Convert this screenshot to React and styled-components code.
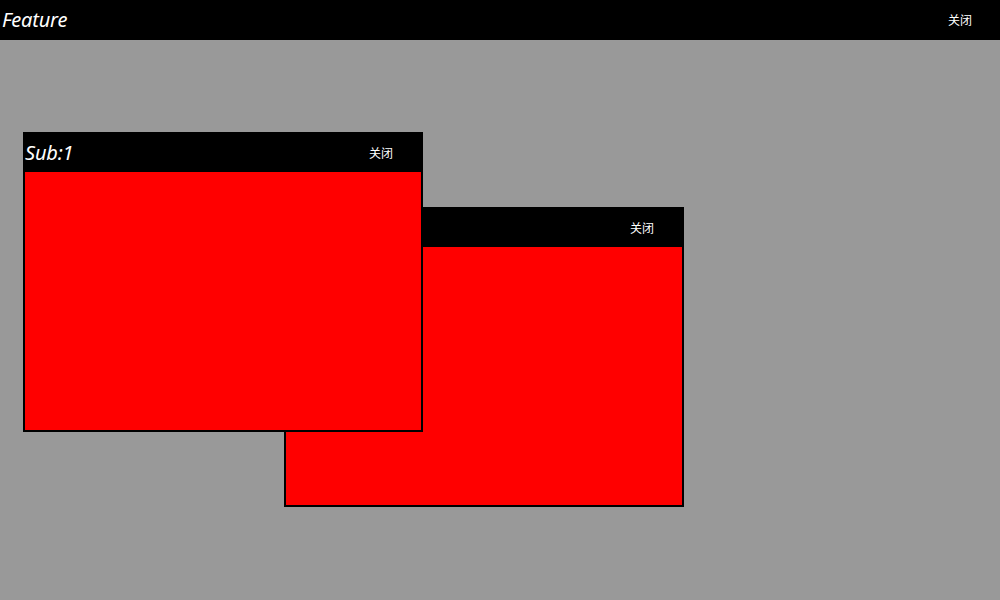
import React from 'react';
import styled, { createGlobalStyle } from 'styled-components';

const GlobalStyle = createGlobalStyle`
  html, body {
    margin: 0;
    padding: 0;
    background: #999999;
    font-family: "Noto Sans", "Noto Sans CJK SC", sans-serif;
  }
`;

const Page = styled.div`
  width: 1000px;
  height: 600px;
  display: flex;
  flex-direction: column;
  background: #999999;
  overflow: hidden;
`;

const Bar = styled.div`
  height: ${(p) => p.height}px;
  flex-shrink: 0;
  display: flex;
  align-items: center;
  justify-content: space-between;
  background: #000;
  color: #fff;
`;

const Title = styled.span`
  font-style: italic;
  font-size: 20px;
  padding: 0 0 2px ${(p) => p.indent}px;
  letter-spacing: -0.2px;
`;

const CloseButton = styled.button`
  background: none;
  border: none;
  color: #fff;
  font-family: "Noto Sans CJK SC", sans-serif;
  font-size: 12px;
  padding: 0 28px 1px 0;
  cursor: pointer;
`;

const Desktop = styled.div`
  position: relative;
  flex: 1;
`;

const Window = styled.div`
  position: absolute;
  left: ${(p) => p.x}px;
  top: ${(p) => p.y}px;
  width: 396px;
  height: 296px;
  border: 2px solid #000;
  display: flex;
  flex-direction: column;
`;

const Body = styled.div`
  flex: 1;
  background: #ff0000;
`;

const SubWindow = ({ title, x, y }) => (
  <Window x={x} y={y}>
    <Bar height={38}>
      <Title indent={0}>{title}</Title>
      <CloseButton>关闭</CloseButton>
    </Bar>
    <Body />
  </Window>
);

const App = () => (
  <Page>
    <GlobalStyle />
    <Bar height={40}>
      <Title indent={2}>Feature</Title>
      <CloseButton>关闭</CloseButton>
    </Bar>
    <Desktop>
      <SubWindow title="Sub:2" x={284} y={167} />
      <SubWindow title="Sub:1" x={23} y={92} />
    </Desktop>
  </Page>
);

export default App;
